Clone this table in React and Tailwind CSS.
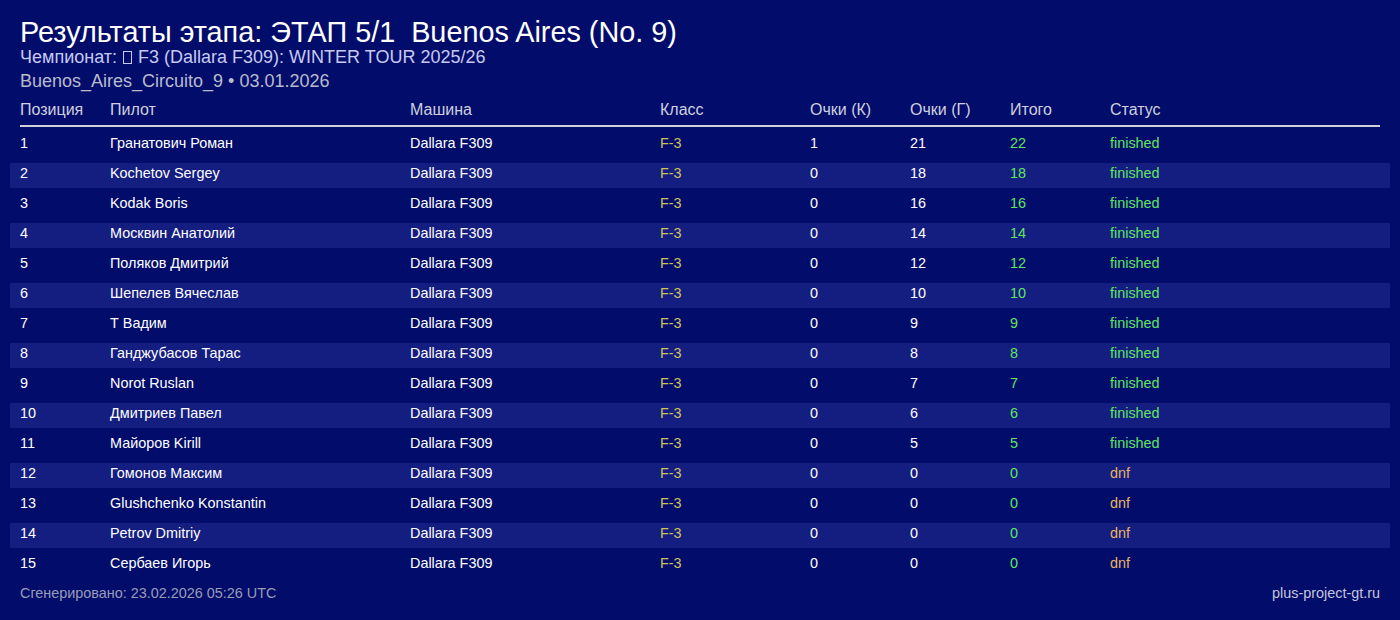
import React from "react";

const rows = [
  ["1", "Гранатович Роман", "1", "21", "22", "finished"],
  ["2", "Kochetov Sergey", "0", "18", "18", "finished"],
  ["3", "Kodak Boris", "0", "16", "16", "finished"],
  ["4", "Москвин Анатолий", "0", "14", "14", "finished"],
  ["5", "Поляков Дмитрий", "0", "12", "12", "finished"],
  ["6", "Шепелев Вячеслав", "0", "10", "10", "finished"],
  ["7", "Т Вадим", "0", "9", "9", "finished"],
  ["8", "Ганджубасов Тарас", "0", "8", "8", "finished"],
  ["9", "Norot Ruslan", "0", "7", "7", "finished"],
  ["10", "Дмитриев Павел", "0", "6", "6", "finished"],
  ["11", "Майоров Kirill", "0", "5", "5", "finished"],
  ["12", "Гомонов Максим", "0", "0", "0", "dnf"],
  ["13", "Glushchenko Konstantin", "0", "0", "0", "dnf"],
  ["14", "Petrov Dmitriy", "0", "0", "0", "dnf"],
  ["15", "Сербаев Игорь", "0", "0", "0", "dnf"],
];

export default function App() {
  return (
    <div
      className="w-[1400px] h-[620px] bg-[#020c6b] text-white overflow-hidden px-[20px] pt-[18px]"
      style={{ fontFamily: '"Liberation Sans", Arial, sans-serif' }}
    >
      <div className="text-[28.8px] leading-[28px] text-white whitespace-pre">
        Результаты этапа: ЭТАП 5/1  Buenos Aires (No. 9)
      </div>
      <div className="mt-[1px] text-[18px] leading-[20px] text-[#c7c9f2]">
        Чемпионат:{" "}
        <span className="inline-block w-[9px] h-[13px] border border-[#c7c9f2] align-[-1px] mx-[1px]"></span>{" "}
        F3 (Dallara F309): WINTER TOUR 2025/26
      </div>
      <div className="mt-[4px] text-[18px] leading-[20px] text-[#b9bbcc]">
        Buenos_Aires_Circuito_9 • 03.01.2026
      </div>
      <div className="mt-[9px] flex text-[16px] leading-[20px] text-[#cfd0de] pb-[5px] border-b-2 border-[#d0d0d8]">
        <div className="w-[90px]">Позиция</div>
        <div className="w-[300px]">Пилот</div>
        <div className="w-[250px]">Машина</div>
        <div className="w-[150px]">Класс</div>
        <div className="w-[100px]">Очки (К)</div>
        <div className="w-[100px]">Очки (Г)</div>
        <div className="w-[100px]">Итого</div>
        <div>Статус</div>
      </div>
      <div className="mt-[6px] mx-[-10px] flex flex-col gap-[5px]">
        {rows.map((r, i) => (
          <div
            key={r[0]}
            className={`flex h-[25px] pt-[2px] px-[10px] text-[14.4px] leading-[16px] ${
              i % 2 === 1 ? "bg-[#141d80]" : ""
            }`}
          >
            <div className="w-[90px]">{r[0]}</div>
            <div className="w-[300px]">{r[1]}</div>
            <div className="w-[250px]">Dallara F309</div>
            <div className="w-[150px] text-[#cdc25e]">F-3</div>
            <div className="w-[100px]">{r[2]}</div>
            <div className="w-[100px]">{r[3]}</div>
            <div className="w-[100px] text-[#5ee65e]">{r[4]}</div>
            <div className={r[5] === "finished" ? "text-[#5ee65e]" : "text-[#e8b264]"}>
              {r[5]}
            </div>
          </div>
        ))}
      </div>
      <div className="mt-[7px] flex justify-between text-[14.4px] leading-[16px]">
        <div className="text-[#9a9cb6]">Сгенерировано: 23.02.2026 05:26 UTC</div>
        <div className="text-[#c3c5dc]">plus-project-gt.ru</div>
      </div>
    </div>
  );
}
